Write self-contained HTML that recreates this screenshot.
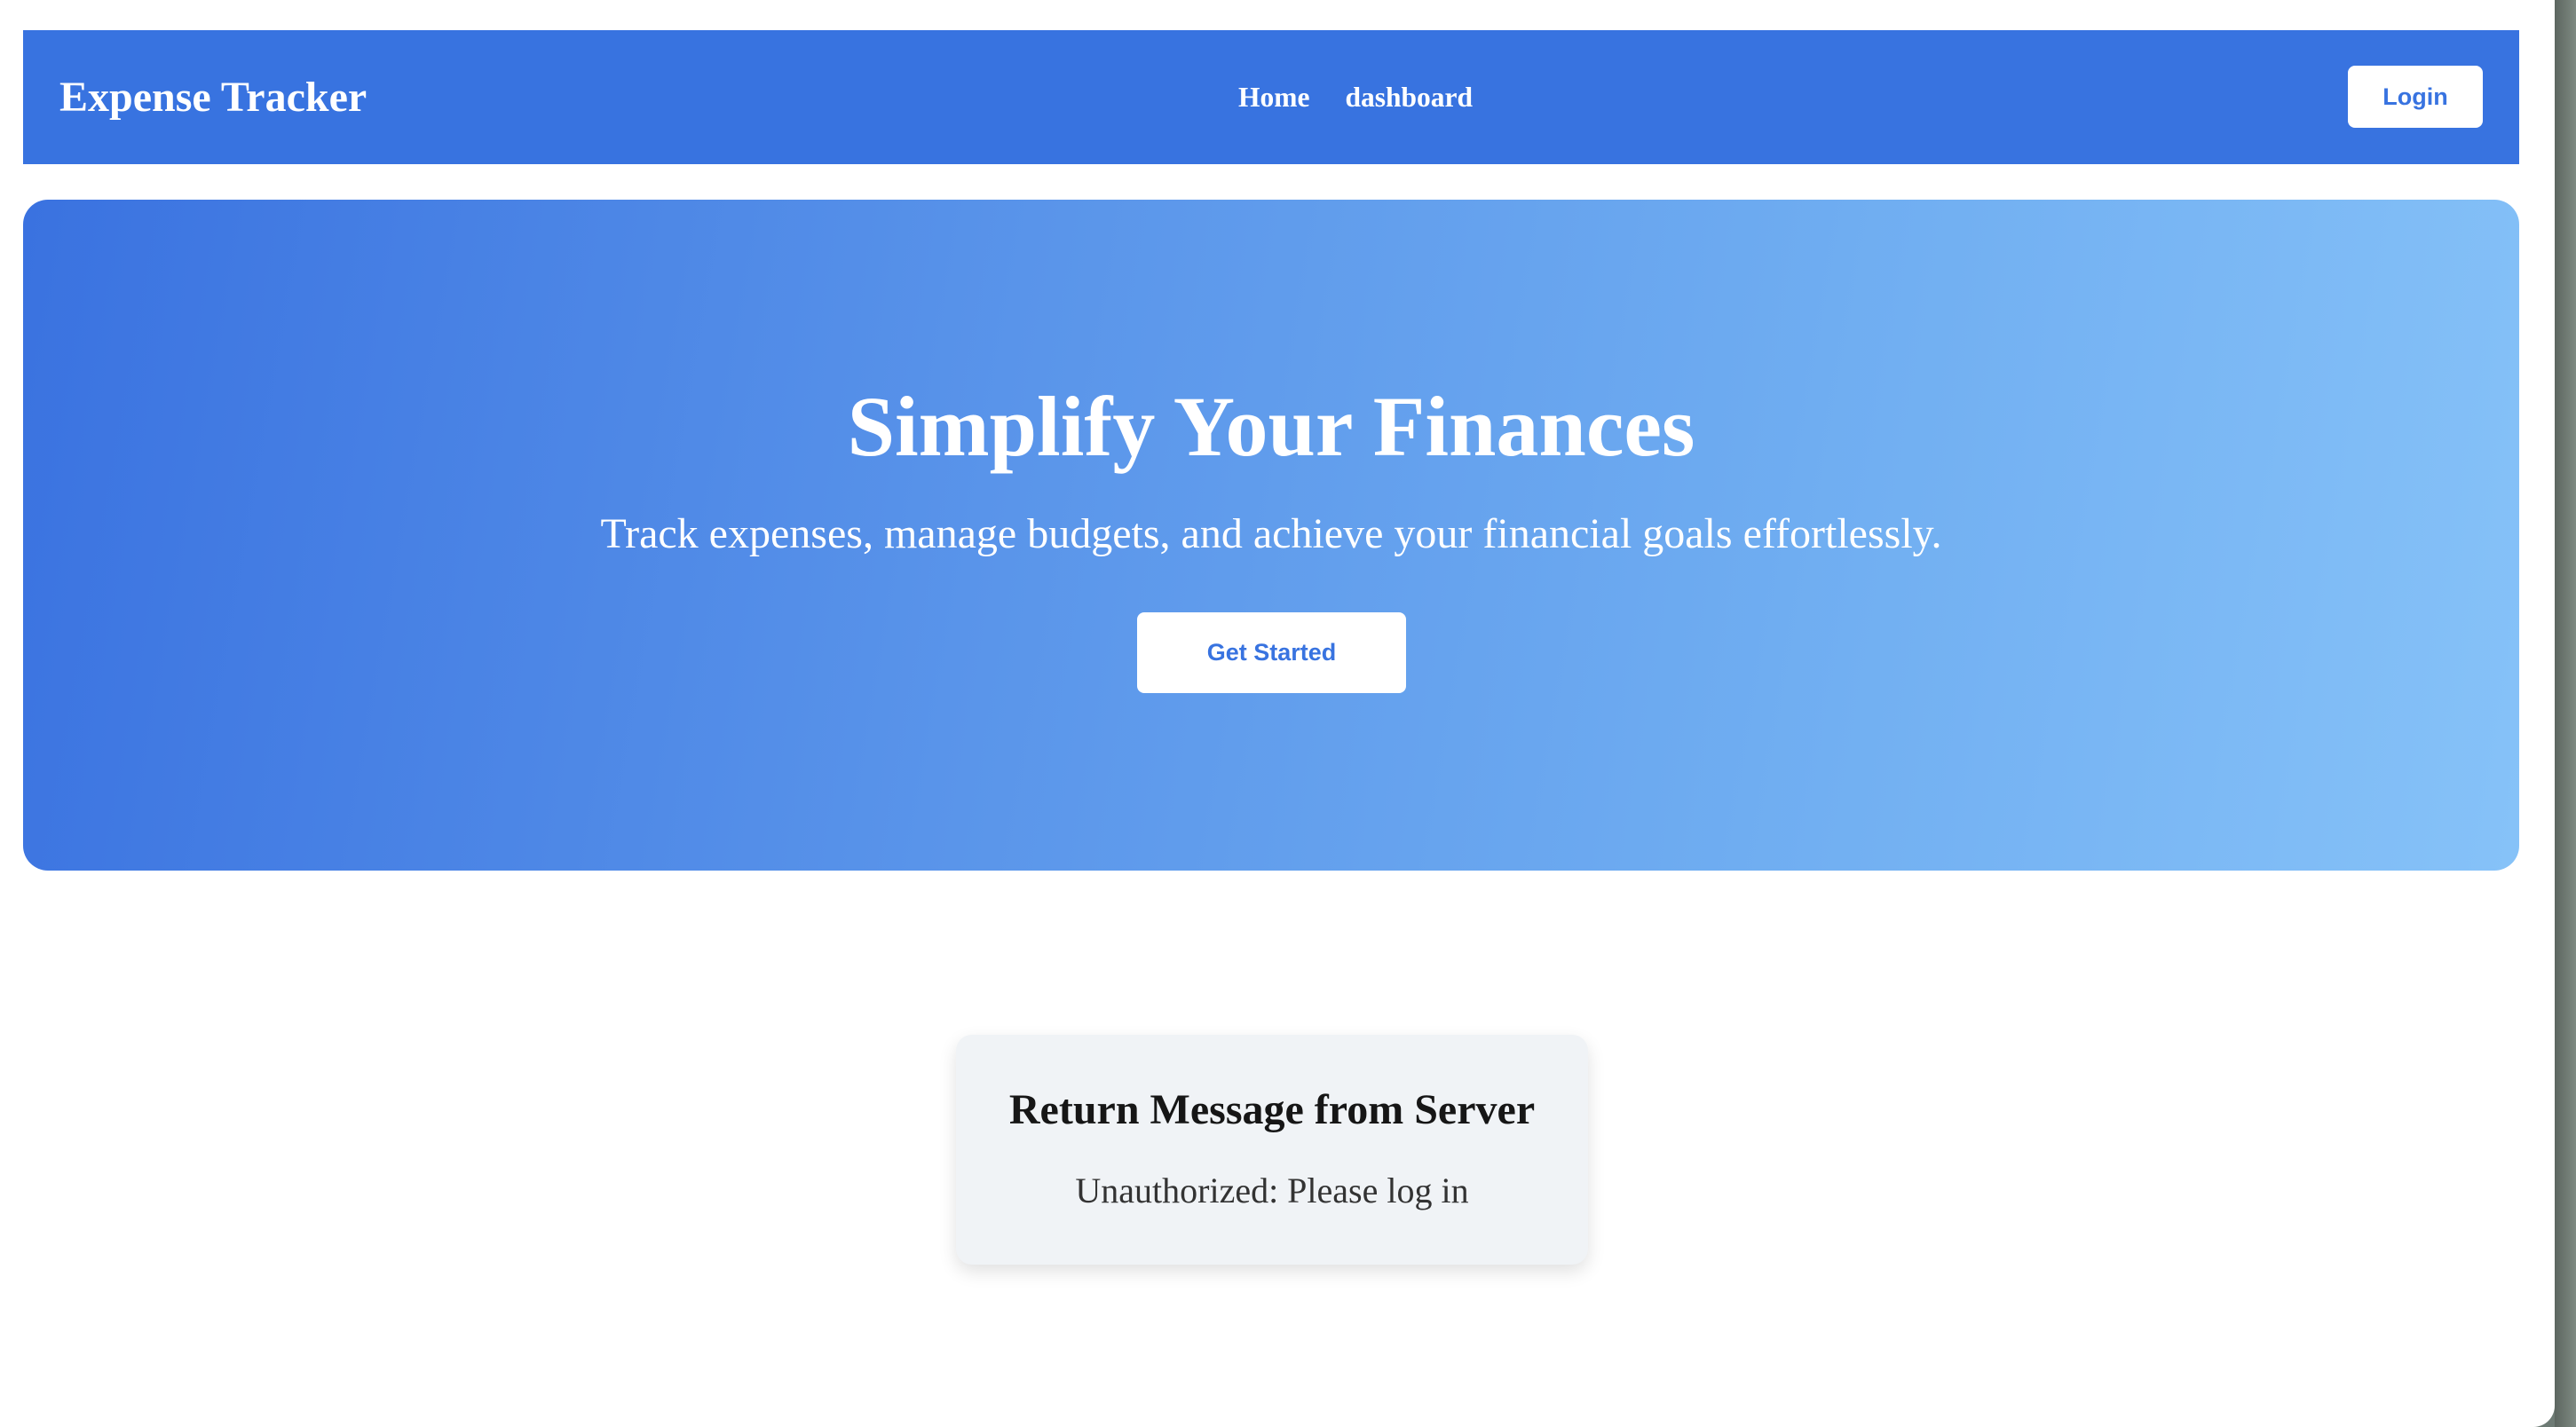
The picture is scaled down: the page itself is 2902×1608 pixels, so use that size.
<!DOCTYPE html>
<html><head><meta charset="utf-8"><style>
*{margin:0;padding:0;box-sizing:border-box}
html,body{width:2902px;height:1608px;overflow:hidden;background:#6d7a74}
.page{position:absolute;left:0;top:0;width:2878px;height:1608px;background:#fff;border-bottom-right-radius:24px;font-family:"Liberation Serif",serif}
.strip{position:absolute;left:2878px;top:0;width:24px;height:1608px;background:linear-gradient(90deg,#5c6660,#7f8a82)}
nav{position:absolute;left:26px;top:34px;width:2812px;height:151px;background:#3873e0;color:#fff}
.logo{position:absolute;left:41px;top:46px;font-size:48px;font-weight:bold;line-height:60px}
.links{position:absolute;left:1369px;top:56px;font-size:31.5px;font-weight:bold;line-height:40px}
.links span{margin-right:40px}
.login{position:absolute;left:2619px;top:40px;width:152px;height:70px;background:#fff;border-radius:8px;color:#3873e0;font-family:"Liberation Sans",sans-serif;font-weight:bold;font-size:27px;line-height:70px;text-align:center}
.hero{position:absolute;left:26px;top:225px;width:2812px;height:756px;border-radius:28px;background:linear-gradient(100deg,#3a72e0 0%,#5a95ea 40%,#6fadf1 70%,#86c2f8 100%);color:#fff;text-align:center}
.hero h1{position:absolute;left:0;right:0;top:201px;font-size:96px;line-height:110px;font-weight:bold}
.hero p{position:absolute;left:0;right:0;top:349px;font-size:48px;line-height:56px}
.btn{position:absolute;left:1255px;top:465px;width:303px;height:91px;background:#fff;border-radius:8px;color:#3873e0;font-family:"Liberation Sans",sans-serif;font-weight:bold;font-size:27px;line-height:91px}
.card{position:absolute;left:1077px;top:1166px;width:712px;height:259px;background:#f0f3f6;border-radius:18px;box-shadow:0 8px 20px rgba(0,0,0,.12);text-align:center}
.card h2{position:absolute;left:0;right:0;top:57px;font-size:48px;line-height:56px;color:#161616}
.card p{position:absolute;left:0;right:0;top:151px;font-size:40px;line-height:50px;color:#333}
</style></head><body>
<div class="page">
<nav><div class="logo">Expense Tracker</div><div class="links"><span>Home</span><span>dashboard</span></div><div class="login">Login</div></nav>
<div class="hero"><h1>Simplify Your Finances</h1><p>Track expenses, manage budgets, and achieve your financial goals effortlessly.</p><div class="btn">Get Started</div></div>
<div class="card"><h2>Return Message from Server</h2><p>Unauthorized: Please log in</p></div>
</div>
<div class="strip"></div>
</body></html>
